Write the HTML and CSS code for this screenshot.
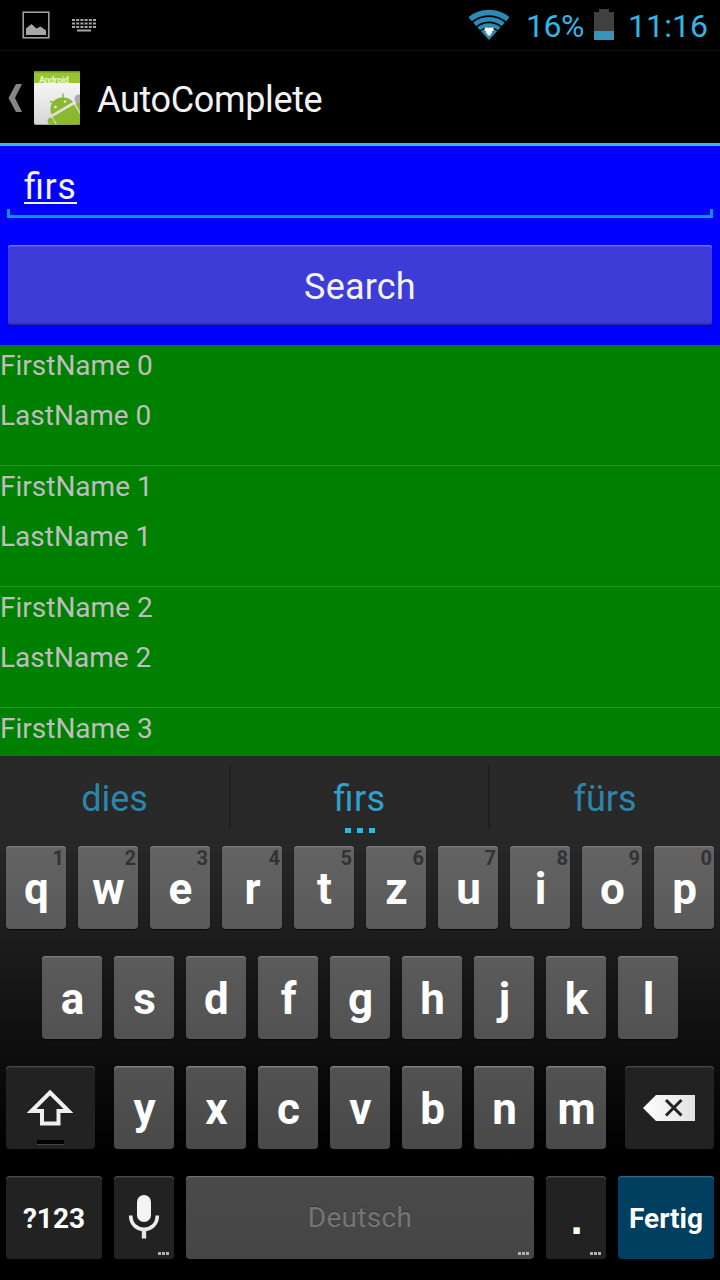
FILE: index.html
```html
<!DOCTYPE html>
<html lang="de">
<head>
<meta charset="utf-8">
<title>AutoComplete</title>
<link rel="stylesheet" href="styles.css">
</head>
<body>
<div class="screen">
  <header class="status">
    <svg class="ico-photo" width="28" height="28" viewBox="0 0 28 28"><rect x="1.200" y="1.200" width="25.600" height="25.600" fill="none" stroke="#a6a6a6" stroke-width="1.500"/><path d="M4 24V17.500L9.500 13l5 4.500 4-2 5.500 4V24z" fill="#a6a6a6"/></svg>
    <svg class="ico-keys" width="24" height="13" viewBox="0 0 24 13"><g stroke="#a6a6a6" stroke-width="2"><path d="M0 1H24M0 4.600H24M0 8H24" stroke-dasharray="3 1.200"/><path d="M5 11.500H19"/></g></svg>
    <span class="spacer"></span>
    <svg class="ico-wifi" width="40" height="31" viewBox="0 0 40 31"><clipPath id="wedge"><path d="M0 0H40V9L20 31 0 9z"/></clipPath><g clip-path="url(#wedge)"><g fill="none" stroke="#2a8bb5"><circle cx="20" cy="33" r="29.500" stroke-width="5.500"/><circle cx="20" cy="33" r="22.800" stroke-width="4.600"/><circle cx="20" cy="33" r="16.800" stroke-width="4"/></g><circle cx="20" cy="33" r="13.600" fill="#2a8bb5"/></g><path d="M15.700 18.500h8.800v3.500H23v2.500h-1.500V26.500h-3V24.500H17V22h-1.300z" fill="#fff"/></svg>
    <span class="percent">16%</span>
    <svg class="ico-battery" width="20" height="31" viewBox="0 0 20 31"><path d="M0 3h5V0h10v3h5v19H0z" fill="#404040"/><path d="M0 22h20v9H0z" fill="#3a93b8"/></svg>
    <span class="clock">11:16</span>
  </header>

  <div class="actionbar">
    <svg class="ico-up" width="14" height="28" viewBox="0 0 14 28"><path d="M8 0H14L7 14 14 28H8L0.500 14z" fill="#858585"/></svg>
    <svg class="ico-app" width="46" height="54" viewBox="0 0 46 54">
      <defs><linearGradient id="paper" x2="0" y2="1"><stop offset="0" stop-color="#fff"/><stop offset="1" stop-color="#d6d6d6"/></linearGradient><clipPath id="page"><rect width="46" height="54" rx="2"/></clipPath></defs>
      <g clip-path="url(#page)">
        <rect width="46" height="54" fill="url(#paper)"/><rect width="46" height="12" fill="#96c52e"/><rect width="46" height="1.500" fill="#6f9a1e"/>
        <text class="app-label" x="5" y="12">Android</text>
        <circle cx="45" cy="28" r="4.500" fill="#aaa"/>
        <g fill="#8ab82e"><path d="M17.500 43.500C14 35 19 28 27 26.500C33 26 37 28 39 31z"/><path d="M18.500 46L40 33.500 46 43V54H23.500z"/><path d="M13.500 50a3 3 0 0 1 5-2.500L22 54H15z"/><path d="M41.500 33L43.500 31 46 32V41z"/></g>
        <path d="M29 27V22.500M20.500 31.500L16 30.500" stroke="#8ab82e" stroke-width="1.400"/><circle cx="21.500" cy="36" r="1.300" fill="#e8f2d4"/><circle cx="31" cy="30.500" r="1.300" fill="#e8f2d4"/>
        <path d="M0 53.500H46" stroke="#888" opacity=".6"/>
      </g>
    </svg>
    <h1 class="title">AutoComplete</h1>
  </div>

  <section class="search">
    <div class="field"><span class="typed">ﬁrs</span></div>
    <button class="search-btn">Search</button>
  </section>

  <ul class="results">
    <li><p>FirstName 0</p><p>LastName 0</p></li>
    <li><p>FirstName 1</p><p>LastName 1</p></li>
    <li><p>FirstName 2</p><p>LastName 2</p></li>
    <li><p>FirstName 3</p></li>
  </ul>

  <section class="keyboard">
    <div class="suggest">
      <span class="word">dies</span><i class="rule"></i>
      <span class="word main">ﬁrs<span class="more"><i></i><i></i><i></i></span></span><i class="rule"></i>
      <span class="word last">fürs</span>
    </div>
    <div class="rows">
      <div class="row r1">
        <b class="key">q<small>1</small></b><b class="key">w<small>2</small></b><b class="key">e<small>3</small></b><b class="key">r<small>4</small></b><b class="key">t<small>5</small></b><b class="key">z<small>6</small></b><b class="key">u<small>7</small></b><b class="key">i<small>8</small></b><b class="key">o<small>9</small></b><b class="key">p<small>0</small></b>
      </div>
      <div class="row r2">
        <b class="key">a</b><b class="key">s</b><b class="key">d</b><b class="key">f</b><b class="key">g</b><b class="key">h</b><b class="key">j</b><b class="key">k</b><b class="key">l</b>
      </div>
      <div class="row r3">
        <div class="key dark shift"><svg width="48" height="38" viewBox="0 0 48 38"><path d="M24 3.500L42.500 22H32.500V34.500H16V22H5.500z" fill="none" stroke="#f0f0f0" stroke-width="4"/></svg><i class="lock"></i></div>
        <div class="letters"><b class="key">y</b><b class="key">x</b><b class="key">c</b><b class="key">v</b><b class="key">b</b><b class="key">n</b><b class="key">m</b></div>
        <div class="key dark erase"><svg width="52" height="26" viewBox="0 0 52 26"><defs><linearGradient id="tag"><stop offset="0" stop-color="#fff"/><stop offset="1" stop-color="#e2e2e2"/></linearGradient></defs><path d="M0 13L13 0H52V26H13z" fill="url(#tag)"/><path d="M23 5L38.500 20.500M38.500 5L23 20.500" stroke="#222" stroke-width="3"/></svg></div>
      </div>
      <div class="row r4">
        <b class="key dark label sym">?123</b>
        <div class="key dark mic"><svg width="32" height="44" viewBox="0 0 32 44"><rect x="9" y="0" width="14" height="27" rx="7" fill="#f4f4f4"/><path d="M2.700 20.500C2.700 39 29.300 39 29.300 20.500" fill="none" stroke="#ececec" stroke-width="3.600"/><path d="M16 34V43.500" stroke="#e4e4e4" stroke-width="4.400"/></svg><span class="hint"><i></i><i></i><i></i></span></div>
        <div class="key space">Deutsch<span class="hint"><i></i><i></i><i></i></span></div>
        <b class="key dark dot">.<span class="hint"><i></i><i></i><i></i></span></b>
        <b class="key label done">Fertig</b>
      </div>
    </div>
  </section>
</div>
</body>
</html>
```
FILE: styles.css
```css
* { box-sizing: border-box; margin: 0; padding: 0; }
body { background: #000; font-family: Roboto, sans-serif; }
svg { display: block; flex: none; }
.screen { width: 720px; height: 1280px; overflow: hidden; display: flex; flex-direction: column; }

.status { height: 51px; flex: none; display: flex; align-items: flex-start; padding: 0 12px 0 22px; border-bottom: 1px solid #111; color: #33b5e5; font-size: 32px; line-height: 38px; }
.spacer { flex: 1; }
.ico-photo { margin-top: 11px; }
.ico-keys { margin: 19px 0 0 22px; }
.ico-wifi { margin-top: 9px; }
.percent { margin: 7px 0 0 17px; width: 58px; white-space: nowrap; letter-spacing: -0.5px; }
.ico-battery { margin: 9px 0 0 10px; }
.clock { margin: 7px 0 0 14px; width: 80px; white-space: nowrap; letter-spacing: 0.1px; }

.actionbar { height: 95px; flex: none; display: flex; align-items: flex-start; padding-left: 8px; border-bottom: 3px solid #33b5e5; }
.ico-up { margin-top: 33px; }
.ico-app { margin: 20px 0 0 12px; }
.app-label { font: bold 9px Roboto, sans-serif; fill: #e8f5c8; letter-spacing: -0.3px; }
.title { margin: 28px 0 0 17px; font-size: 36px; line-height: 42px; font-weight: 400; color: #f3f3f3; letter-spacing: -0.35px; }

.search { height: 199px; flex: none; background: #00f; padding: 0 7px; }
.field { height: 72px; padding: 20px 0 0 17px; background: linear-gradient(#0099cc, #0099cc) bottom / 100% 3px no-repeat, linear-gradient(#0099cc, #0099cc) left bottom / 3px 9px no-repeat, linear-gradient(#0099cc, #0099cc) right bottom / 3px 9px no-repeat; }
.typed { display: inline-block; height: 38px; line-height: 42px; font-size: 36px; letter-spacing: 0.6px; color: #f3f3f3; border-bottom: 2px solid #f3f3f3; }
.search-btn { display: block; width: 704px; height: 80px; margin: 27px 1px 0; padding-top: 2px; border: 0; border-radius: 3px; background: #3e3cd6; box-shadow: inset 0 1px #7775ea, inset 0 2px #514fdc, inset 0 -1px #2625a0, inset 0 -2px #3432b8; color: #f3f3f3; font: 36px/80px Roboto, sans-serif; letter-spacing: 0.2px; }

.results { height: 411px; flex: none; overflow: hidden; background: #008000; list-style: none; color: #bebebe; font-size: 28px; }
.results li { height: 121px; padding-top: 1px; border-bottom: 1px solid #269326; }
.results p { height: 50px; line-height: 39px; }

.keyboard { height: 524px; flex: none; background: linear-gradient(#292929, #282828 80px, #1c1c1c 185px, #000 400px); }
.suggest { height: 90px; display: flex; align-items: flex-start; font-size: 36px; line-height: 42px; color: #2d85ab; }
.word { flex: 1; height: 80px; padding-top: 22px; text-align: center; }
.word.main { position: relative; flex: none; width: 257px; color: #31a1cd; letter-spacing: 0.4px; }
.word.last { flex: none; width: 230px; }
.rule { width: 2px; height: 64px; margin-top: 9px; background: #1f1f1f; }
.more { position: absolute; left: 114px; top: 72px; display: flex; gap: 6px; }
.more i { width: 6px; height: 5px; background: #33b5e5; }

.rows { display: flex; flex-direction: column; gap: 27px; padding: 0 6px; }
.row { display: flex; gap: 12px; height: 83px; }
.r1 { --face: linear-gradient(#636363, #5a5a5a); }
.r2 { --face: linear-gradient(#5b5b5b, #525252); padding: 0 36px; }
.r3 { --face: linear-gradient(#525252, #494949); justify-content: space-between; }
.letters { display: flex; gap: 12px; }
.key { position: relative; width: 60px; height: 83px; flex: none; display: flex; align-items: center; justify-content: center; border-radius: 4px; background: var(--face); box-shadow: inset 0 1px #7c7c7c, inset 0 2px #686868, 0 1px 1px #080808; color: #fff; font-size: 44px; line-height: 52px; padding: 2px 0 0 1px; }
.key small { position: absolute; right: 2px; top: 1px; font-size: 20px; line-height: 23px; color: #333; }
.key.dark { background: #222; box-shadow: inset 0 1px #484848, inset 0 2px #303030; }
.key.shift, .key.erase { width: 89px; padding: 0; }
.shift svg { margin: 1px 2px 0 0; }
.erase svg { margin-right: 2px; }
.lock { position: absolute; left: 31px; top: 74px; width: 27px; height: 4px; background: #000; border-bottom: 1px solid #444; box-sizing: content-box; }
.key.label { width: 96px; font-size: 28px; padding-left: 0; }
.key.mic { padding: 0; }
.mic svg { margin-top: -2px; }
.key.space { width: 348px; background: linear-gradient(#4a4a4a, #454545); color: #757575; font-size: 28px; letter-spacing: 0.3px; padding: 1px 0 0; text-shadow: 0 -1px #333; box-shadow: inset 0 1px #6e6e6e, inset 0 2px #555; }
.key.dot { font-family: "Liberation Sans", sans-serif; padding-top: 2px; }
.key.done { background: #003f60; box-shadow: inset 0 1px #33647f, inset 0 2px #104b6a; }
.hint { position: absolute; right: 5px; bottom: 4px; display: flex; gap: 1px; }
.hint i { width: 3px; height: 3px; background: #b0b0b0; }
```
